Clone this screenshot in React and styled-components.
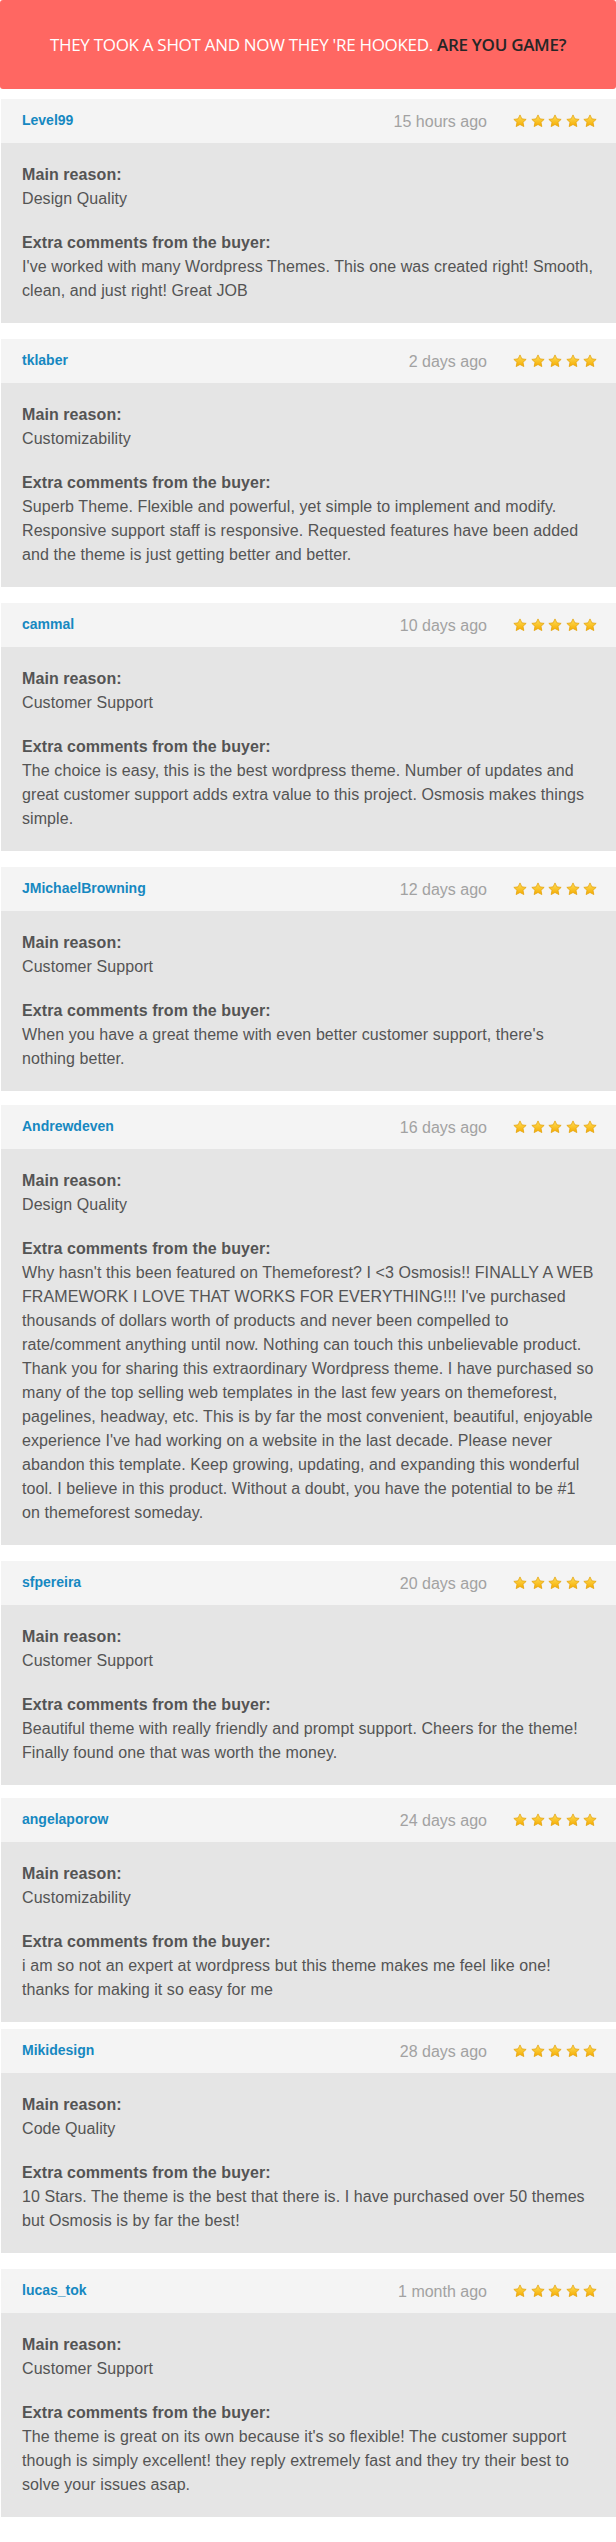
import React from "react";
import styled, { createGlobalStyle } from "styled-components";

const reviews = [
  {
    user: "Level99",
    when: "15 hours ago",
    reason: "Design Quality",
    comment:
      "I've worked with many Wordpress Themes. This one was created right! Smooth, clean, and just right! Great JOB",
    space: 10,
  },
  {
    user: "tklaber",
    when: "2 days ago",
    reason: "Customizability",
    comment:
      "Superb Theme. Flexible and powerful, yet simple to implement and modify. Responsive support staff is responsive. Requested features have been added and the theme is just getting better and better.",
    space: 16,
  },
  {
    user: "cammal",
    when: "10 days ago",
    reason: "Customer Support",
    comment:
      "The choice is easy, this is the best wordpress theme. Number of updates and great customer support adds extra value to this project. Osmosis makes things simple.",
    space: 16,
  },
  {
    user: "JMichaelBrowning",
    when: "12 days ago",
    reason: "Customer Support",
    comment:
      "When you have a great theme with even better customer support, there's nothing better.",
    space: 16,
  },
  {
    user: "Andrewdeven",
    when: "16 days ago",
    reason: "Design Quality",
    comment:
      "Why hasn't this been featured on Themeforest? I <3 Osmosis!! FINALLY A WEB FRAMEWORK I LOVE THAT WORKS FOR EVERYTHING!!! I've purchased thousands of dollars worth of products and never been compelled to rate/comment anything until now. Nothing can touch this unbelievable product. Thank you for sharing this extraordinary Wordpress theme. I have purchased so many of the top selling web templates in the last few years on themeforest, pagelines, headway, etc. This is by far the most convenient, beautiful, enjoyable experience I've had working on a website in the last decade. Please never abandon this template. Keep growing, updating, and expanding this wonderful tool. I believe in this product. Without a doubt, you have the potential to be #1 on themeforest someday.",
    space: 14,
  },
  {
    user: "sfpereira",
    when: "20 days ago",
    reason: "Customer Support",
    comment:
      "Beautiful theme with really friendly and prompt support. Cheers for the theme! Finally found one that was worth the money.",
    space: 16,
  },
  {
    user: "angelaporow",
    when: "24 days ago",
    reason: "Customizability",
    comment:
      "i am so not an expert at wordpress but this theme makes me feel like one! thanks for making it so easy for me",
    space: 13,
  },
  {
    user: "Mikidesign",
    when: "28 days ago",
    reason: "Code Quality",
    comment:
      "10 Stars. The theme is the best that there is. I have purchased over 50 themes but Osmosis is by far the best!",
    space: 7,
  },
  {
    user: "lucas_tok",
    when: "1 month ago",
    reason: "Customer Support",
    comment:
      "The theme is great on its own because it's so flexible! The customer support though is simply excellent! they reply extremely fast and they try their best to solve your issues asap.",
    space: 16,
  },
];

function Star({ id }) {
  return (
    <svg width="14" height="14" viewBox="0 0 20 20">
      <defs>
        <linearGradient id={id} x1="0" y1="0" x2="0" y2="1">
          <stop offset="0" stopColor="#ffdf5a" />
          <stop offset="1" stopColor="#f5ab00" />
        </linearGradient>
      </defs>
      <path
        d="M10 1.3l2.7 5.6 6.1.8-4.5 4.2 1.2 6.1L10 15l-5.5 3 1.2-6.1-4.5-4.2 6.1-.8z"
        fill={`url(#${id})`}
        stroke="#e39e00"
        strokeWidth="1"
        strokeLinejoin="round"
      />
    </svg>
  );
}

export default function App() {
  return (
    <Page>
      <GlobalStyle />
      <Banner>
        THEY TOOK A SHOT AND NOW THEY 'RE HOOKED. <strong>ARE YOU GAME?</strong>
      </Banner>
      {reviews.map((r, i) => (
        <Card key={r.user} $space={r.space}>
          <CardHead>
            <User>{r.user}</User>
            <When>{r.when}</When>
            <Stars>
              {[0, 1, 2, 3, 4].map((s) => (
                <Star key={s} id={`star-${i}-${s}`} />
              ))}
            </Stars>
          </CardHead>
          <CardBody>
            <Group>
              <Label>Main reason:</Label>
              <Text>{r.reason}</Text>
            </Group>
            <Group>
              <Label>Extra comments from the buyer:</Label>
              <Text>{r.comment}</Text>
            </Group>
          </CardBody>
        </Card>
      ))}
    </Page>
  );
}

const GlobalStyle = createGlobalStyle`
  html, body {
    margin: 0;
    padding: 0;
    background: #ffffff;
  }
  body {
    font-family: "Liberation Sans", Arial, sans-serif;
  }
`;

const Page = styled.div`
  width: 616px;
  padding-bottom: 25px;
`;

const Banner = styled.div`
  height: 89px;
  display: flex;
  align-items: center;
  justify-content: center;
  background: #ff6762;
  border-radius: 3px;
  color: #ffffff;
  font-family: "Open Sans", sans-serif;
  font-size: 17px;
  letter-spacing: -0.3px;
  white-space: pre;
  strong {
    color: #262626;
    font-weight: 600;
  }
`;

const Card = styled.div`
  margin: ${(p) => p.$space}px 0 0 1px;
`;

const CardHead = styled.div`
  height: 44px;
  display: flex;
  align-items: center;
  padding: 0 19px 0 21px;
  background: #f4f4f4;
`;

const User = styled.span`
  flex: 1;
  font-size: 14px;
  font-weight: 700;
  color: #1688c1;
  margin-top: -2px;
`;

const When = styled.span`
  font-size: 16px;
  color: #a2a2a2;
  margin-right: 26px;
  margin-top: 1px;
`;

const Stars = styled.span`
  display: flex;
  gap: 3.5px;
`;

const CardBody = styled.div`
  background: #e5e5e5;
  padding: 20px 20px 20px 21px;
  display: flex;
  flex-direction: column;
  gap: 20px;
`;

const Group = styled.div`
  font-size: 16px;
  line-height: 24px;
  letter-spacing: 0.08px;
  color: #545454;
`;

const Label = styled.div`
  font-weight: 700;
`;

const Text = styled.div``;
